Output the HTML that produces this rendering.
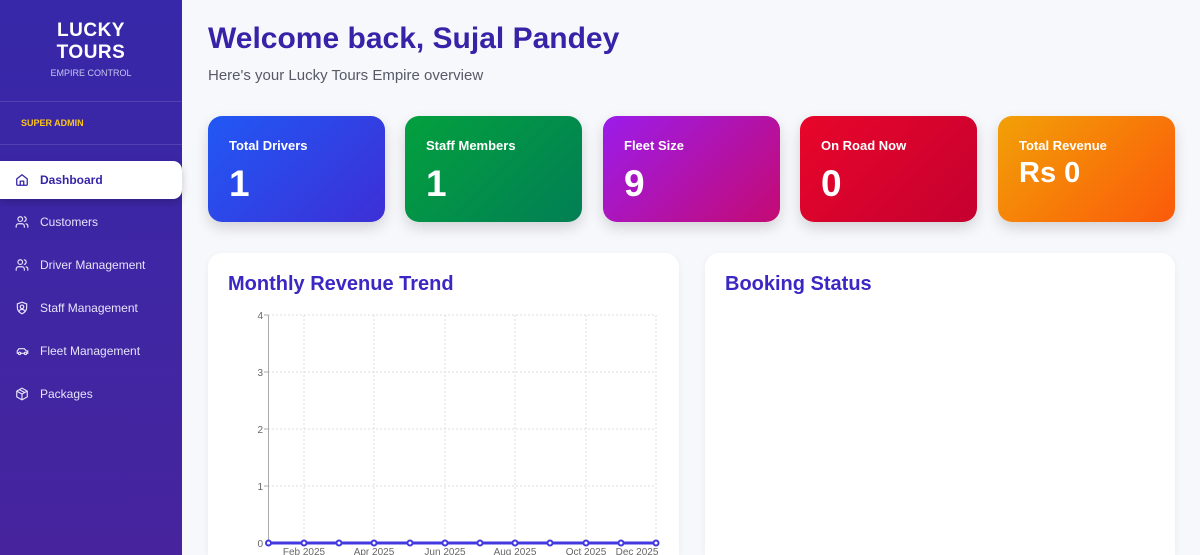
<!DOCTYPE html>
<html style="height:555px;overflow:hidden"><head><meta charset="utf-8"><style>
*{margin:0;padding:0;box-sizing:border-box}
body{width:1200px;height:555px;overflow:hidden;background:#f7f8fb;font-family:"Liberation Sans",sans-serif;position:relative}
.sb{position:absolute;left:0;top:0;width:182px;height:555px;background:linear-gradient(180deg,#3628a9,#47249e)}
.logo{position:absolute;top:20px;width:182px;text-align:center;color:#fff;font-weight:bold;font-size:19px;line-height:22px;letter-spacing:.5px}
.logo small{display:block;font-size:9px;font-weight:normal;color:#c9c4f0;letter-spacing:0;margin-top:3px;line-height:12px}
.hr{position:absolute;left:0;width:182px;height:1px;background:rgba(255,255,255,.12)}
.sa{position:absolute;left:21px;top:118px;color:#fcc419;font-size:9px;font-weight:bold}
.nav{position:absolute;left:0;width:182px;height:38px;color:#e6e3fa;font-size:12px;display:flex;align-items:center;padding-left:40px}
.nav svg{position:absolute;left:15px;top:12px}
.nav.act{background:#fff;border-radius:0 9px 9px 0;color:#3524a8;font-weight:bold;box-shadow:0 3px 8px rgba(0,0,0,.2)}
h1{position:absolute;left:208px;top:22px;font-size:30px;color:#3524a8;font-weight:bold}
.sub{position:absolute;left:208px;top:67px;font-size:15px;color:#555a66}
.card{position:absolute;top:116px;width:177px;height:106px;border-radius:14px;color:#fff;padding:22px 21px;box-shadow:0 6px 14px rgba(0,0,0,.15)}
.card .t{font-size:13px;font-weight:bold}
.card .v{font-size:37px;font-weight:bold;margin-top:10px}
.panel{position:absolute;top:253px;height:302px;background:#fff;border-radius:14px 14px 0 0;box-shadow:0 2px 8px rgba(0,0,0,.05)}
.panel h2{position:absolute;left:20px;top:20px;font-size:20px;color:#3a27c4;font-weight:bold}
</style></head><body>
<div class="sb">
<div class="logo">LUCKY<br>TOURS<small>EMPIRE CONTROL</small></div>
<div class="hr" style="top:101px"></div>
<div class="sa">SUPER ADMIN</div>
<div class="hr" style="top:144px"></div>
<div class="nav act" style="top:161px"><svg width="14" height="14" viewBox="0 0 24 24" fill="none" stroke="#3524a8" stroke-width="2.2" stroke-linecap="round" stroke-linejoin="round"><path d="M3 10l9-7 9 7v10a1 1 0 0 1-1 1H4a1 1 0 0 1-1-1z"/><path d="M9 21v-7h6v7"/></svg>Dashboard</div>
<div class="nav" style="top:203px"><svg width="14" height="14" viewBox="0 0 24 24" fill="none" stroke="#e6e3fa" stroke-width="2" stroke-linecap="round"><circle cx="9" cy="7" r="4"/><path d="M2 21v-2a4 4 0 0 1 4-4h6a4 4 0 0 1 4 4v2M16 3.1a4 4 0 0 1 0 7.8M22 21v-2a4 4 0 0 0-3-3.9"/></svg>Customers</div>
<div class="nav" style="top:246px"><svg width="14" height="14" viewBox="0 0 24 24" fill="none" stroke="#e6e3fa" stroke-width="2" stroke-linecap="round"><circle cx="9" cy="7" r="4"/><path d="M2 21v-2a4 4 0 0 1 4-4h6a4 4 0 0 1 4 4v2M16 3.1a4 4 0 0 1 0 7.8M22 21v-2a4 4 0 0 0-3-3.9"/></svg>Driver Management</div>
<div class="nav" style="top:289px"><svg width="14" height="14" viewBox="0 0 24 24" fill="none" stroke="#e6e3fa" stroke-width="2" stroke-linecap="round"><path d="M12 2l8 3v6c0 5-3.5 9-8 11-4.5-2-8-6-8-11V5z"/><circle cx="12" cy="10" r="3"/><path d="M7.5 17a5 5 0 0 1 9 0"/></svg>Staff Management</div>
<div class="nav" style="top:332px"><svg width="15" height="14" viewBox="0 0 24 24" fill="none" stroke="#e6e3fa" stroke-width="2" stroke-linecap="round"><path d="M3 16v-4l3-4h9l4 4h2v4h-2M9 16h6M3 16h2"/><circle cx="7" cy="16" r="2"/><circle cx="17" cy="16" r="2"/></svg>Fleet Management</div>
<div class="nav" style="top:375px"><svg width="14" height="14" viewBox="0 0 24 24" fill="none" stroke="#e6e3fa" stroke-width="2" stroke-linejoin="round"><path d="M12 2l9 5v10l-9 5-9-5V7z"/><path d="M3 7l9 5 9-5M12 12v10M7.5 4.5l9 5"/></svg>Packages</div>
</div>
<h1>Welcome back, Sujal Pandey</h1>
<div class="sub">Here's your Lucky Tours Empire overview</div>
<div class="card" style="left:208px;background:linear-gradient(135deg,#2158f5,#3d2fd6)"><div class="t">Total Drivers</div><div class="v">1</div></div>
<div class="card" style="left:405px;background:linear-gradient(135deg,#03a03e,#027f55)"><div class="t">Staff Members</div><div class="v">1</div></div>
<div class="card" style="left:603px;background:linear-gradient(135deg,#9b1ceb,#c50a73)"><div class="t">Fleet Size</div><div class="v">9</div></div>
<div class="card" style="left:800px;background:linear-gradient(135deg,#e8062a,#c50030)"><div class="t">On Road Now</div><div class="v">0</div></div>
<div class="card" style="left:998px;background:linear-gradient(135deg,#f2a007,#fb5a0a)"><div class="t">Total Revenue</div><div class="v" style="font-size:29px;margin-top:4px">Rs 0</div></div>
<div class="panel" style="left:208px;width:471px"><h2>Monthly Revenue Trend</h2></div>
<div class="panel" style="left:705px;width:470px"><h2>Booking Status</h2></div>
<svg style="position:absolute;left:0;top:0" width="1200" height="555">
<g stroke="#ddd" stroke-dasharray="2,2" stroke-width="1">
<line x1="268" y1="315" x2="656" y2="315"/><line x1="268" y1="372" x2="656" y2="372"/><line x1="268" y1="429" x2="656" y2="429"/><line x1="268" y1="486" x2="656" y2="486"/>
<line x1="304" y1="315" x2="304" y2="543"/><line x1="374" y1="315" x2="374" y2="543"/><line x1="445" y1="315" x2="445" y2="543"/><line x1="515" y1="315" x2="515" y2="543"/><line x1="586" y1="315" x2="586" y2="543"/><line x1="656" y1="315" x2="656" y2="543"/>
</g>
<line x1="268.5" y1="315" x2="268.5" y2="543" stroke="#aaa"/>
<g stroke="#aaa"><line x1="264" y1="315" x2="268" y2="315"/><line x1="264" y1="372" x2="268" y2="372"/><line x1="264" y1="429" x2="268" y2="429"/><line x1="264" y1="486" x2="268" y2="486"/></g>
<g font-size="10" fill="#666" text-anchor="end" font-family="Liberation Sans"><text x="263" y="319">4</text><text x="263" y="376">3</text><text x="263" y="433">2</text><text x="263" y="490">1</text><text x="263" y="547">0</text></g>
<g font-size="10" fill="#666" text-anchor="middle" font-family="Liberation Sans"><text x="304" y="555">Feb 2025</text><text x="374" y="555">Apr 2025</text><text x="445" y="555">Jun 2025</text><text x="515" y="555">Aug 2025</text><text x="586" y="555">Oct 2025</text><text x="637" y="555">Dec 2025</text></g>
<line x1="268" y1="543" x2="656" y2="543" stroke="#4338e0" stroke-width="3"/>
<g fill="#fff" stroke="#4338e0" stroke-width="2">
<circle cx="268.5" cy="543" r="2.5"/><circle cx="304" cy="543" r="2.5"/><circle cx="339" cy="543" r="2.5"/><circle cx="374" cy="543" r="2.5"/><circle cx="410" cy="543" r="2.5"/><circle cx="445" cy="543" r="2.5"/><circle cx="480" cy="543" r="2.5"/><circle cx="515" cy="543" r="2.5"/><circle cx="550" cy="543" r="2.5"/><circle cx="586" cy="543" r="2.5"/><circle cx="621" cy="543" r="2.5"/><circle cx="656" cy="543" r="2.5"/>
</g>
</svg>
</body></html>
